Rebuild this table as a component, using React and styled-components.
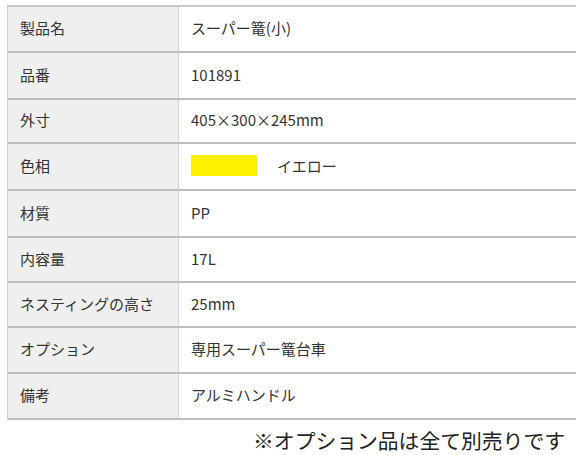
import { Fragment } from "react";
import styled, { createGlobalStyle } from "styled-components";

const GlobalStyle = createGlobalStyle`
  html, body {
    margin: 0;
    padding: 0;
    background: #fff;
  }
  body {
    font-family: "Noto Sans CJK JP", "Noto Sans", sans-serif;
    color: #333;
  }
`;

const specs = [
  { label: "製品名", value: "スーパー篭(小)", h: 46 },
  { label: "品番", value: "101891", h: 47 },
  { label: "外寸", value: "405×300×245mm", h: 44 },
  { label: "色相", value: "イエロー", swatch: "#fff000", h: 47 },
  { label: "材質", value: "PP", h: 47 },
  { label: "内容量", value: "17L", h: 45 },
  { label: "ネスティングの高さ", value: "25mm", h: 45 },
  { label: "オプション", value: "専用スーパー篭台車", h: 46 },
  { label: "備考", value: "アルミハンドル", h: 46 },
];

const Page = styled.div`
  padding: 5px 11px 0 7px;
`;

const Table = styled.div`
  display: grid;
  grid-template-columns: 171px 1fr;
  border-top: 2px solid #c8c8c8;
  border-left: 1px solid #d0d0d0;
`;

const Label = styled.div`
  display: flex;
  align-items: center;
  height: ${(p) => p.$h}px;
  padding: 0 0 3px 12px;
  background: #efefef;
  border-right: 1px solid #d4d4d4;
  border-bottom: 2px solid #bdbdbd;
  font-size: 15px;
  color: #333;
  box-sizing: border-box;
`;

const Value = styled.div`
  display: flex;
  align-items: center;
  height: ${(p) => p.$h}px;
  padding: 0 0 3px 12px;
  background: #fff;
  border-bottom: 2px solid #bdbdbd;
  font-size: 15px;
  color: #333;
  box-sizing: border-box;
`;

const Swatch = styled.span`
  display: inline-block;
  width: 66px;
  height: 21px;
  background: ${(p) => p.$color};
  margin-right: 20px;
`;

const Note = styled.div`
  display: flex;
  justify-content: flex-end;
  padding: 5px 22px 0 0;
  font-size: 20.8px;
  color: #222;
`;

export default function App() {
  return (
    <>
      <GlobalStyle />
      <Page>
        <Table>
          {specs.map((row) => (
            <Fragment key={row.label}>
              <Label $h={row.h}>{row.label}</Label>
              <Value $h={row.h}>
                {row.swatch && <Swatch $color={row.swatch} />}
                {row.value}
              </Value>
            </Fragment>
          ))}
        </Table>
      </Page>
      <Note>※オプション品は全て別売りです</Note>
    </>
  );
}
